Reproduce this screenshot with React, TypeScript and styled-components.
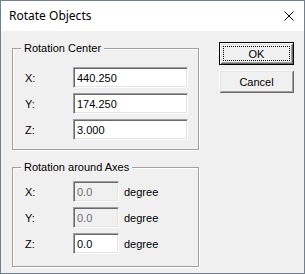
import React from "react";
import styled, { createGlobalStyle } from "styled-components";

const Global = createGlobalStyle`
  html, body { margin: 0; padding: 0; background: #f0f0f0; }
  body { font-family: "Liberation Sans", Arial, sans-serif; font-size: 11px; color: #000; }
`;

const Window = styled.div`
  box-sizing: border-box;
  width: 305px;
  height: 274px;
  border: 1px solid #71808f;
  background: #f0f0f0;
  display: flex;
  flex-direction: column;
`;

const TitleBar = styled.div`
  height: 30px;
  background: #fff;
  display: flex;
  align-items: center;
  justify-content: space-between;
  padding: 0 10px 0 8px;
  flex: none;
`;

const Title = styled.div`
  font-family: "Noto Sans", "Segoe UI", sans-serif;
  font-size: 12px;
  color: #000;
  margin-top: -1px;
`;

const CloseIcon = styled.svg`
  display: block;
  width: 10px;
  height: 10px;
`;

const Body = styled.div`
  display: flex;
  padding: 11px 9px 0 11px;
  gap: 20px;
`;

const LeftCol = styled.div`
  display: flex;
  flex-direction: column;
  gap: 11px;
`;

const Group = styled.fieldset<{ $pt: number; $pb: number }>`
  margin: 0;
  width: 187px;
  box-sizing: border-box;
  border: 1px solid #a0a0a0;
  box-shadow: inset 1px 1px 0 #fff, 1px 1px 0 #fff;
  padding: ${(p) => p.$pt}px 10px ${(p) => p.$pb}px 12px;
  display: flex;
  flex-direction: column;
  gap: 5px;
`;

const Legend = styled.legend`
  margin-left: -4px;
  padding: 0 3px 0 3px;
  line-height: 13px;
  height: 13px;
  background: #f0f0f0;
`;

const Row = styled.div`
  display: flex;
  align-items: center;
  height: 21px;
`;

const Label = styled.span`
  width: 48px;
  flex: none;
`;

const Field = styled.div<{ $w: number; $disabled?: boolean }>`
  box-sizing: border-box;
  width: ${(p) => p.$w}px;
  height: 21px;
  border-top: 1px solid #a0a0a0;
  border-left: 1px solid #a0a0a0;
  border-right: 1px solid #fff;
  border-bottom: 1px solid #fff;
  box-shadow: inset 1px 1px 0 #696969, inset -1px -1px 0 #e3e3e3;
  background: ${(p) => (p.$disabled ? "#f0f0f0" : "#fff")};
  color: ${(p) => (p.$disabled ? "#6d6d6d" : "#000")};
  padding: 0 0 0 3px;
  display: flex;
  align-items: center;
  flex: none;
`;

const Unit = styled.span`
  margin-left: 5px;
`;

const RightCol = styled.div`
  display: flex;
  flex-direction: column;
  gap: 5px;
`;

const Button = styled.div<{ $default?: boolean }>`
  position: relative;
  box-sizing: border-box;
  width: 75px;
  height: 23px;
  display: flex;
  align-items: center;
  justify-content: center;
  background: #f0f0f0;
  border: ${(p) => (p.$default ? "1px solid #000" : "none")};
  box-shadow: inset 1px 1px 0 #fff, inset -1px -1px 0 #696969,
    inset 2px 2px 0 #e3e3e3, inset -2px -2px 0 #a0a0a0;
  ${(p) =>
    p.$default
      ? `&::after {
    content: "";
    position: absolute;
    left: 3px; top: 3px; right: 3px; bottom: 3px;
    border: 1px dotted #000;
  }`
      : ""}
`;

const axesCenter = [
  ["X:", "440.250"],
  ["Y:", "174.250"],
  ["Z:", "3.000"],
];

const axesRot: [string, string, boolean][] = [
  ["X:", "0.0", true],
  ["Y:", "0.0", true],
  ["Z:", "0.0", false],
];

export default function App() {
  return (
    <>
      <Global />
      <Window>
        <TitleBar>
          <Title>Rotate Objects</Title>
          <CloseIcon viewBox="0 0 10 10">
            <path d="M0.5 0.5 L9.5 9.5 M9.5 0.5 L0.5 9.5" stroke="#000" strokeWidth="1" fill="none" />
          </CloseIcon>
        </TitleBar>
        <Body>
          <LeftCol>
            <Group $pt={12} $pb={9}>
              <Legend>Rotation Center</Legend>
              {axesCenter.map(([l, v]) => (
                <Row key={l}>
                  <Label>{l}</Label>
                  <Field $w={115}>{v}</Field>
                </Row>
              ))}
            </Group>
            <Group $pt={7} $pb={12}>
              <Legend>Rotation around Axes</Legend>
              {axesRot.map(([l, v, d]) => (
                <Row key={l}>
                  <Label>{l}</Label>
                  <Field $w={46} $disabled={d}>{v}</Field>
                  <Unit>degree</Unit>
                </Row>
              ))}
            </Group>
          </LeftCol>
          <RightCol>
            <Button $default>OK</Button>
            <Button>Cancel</Button>
          </RightCol>
        </Body>
      </Window>
    </>
  );
}
